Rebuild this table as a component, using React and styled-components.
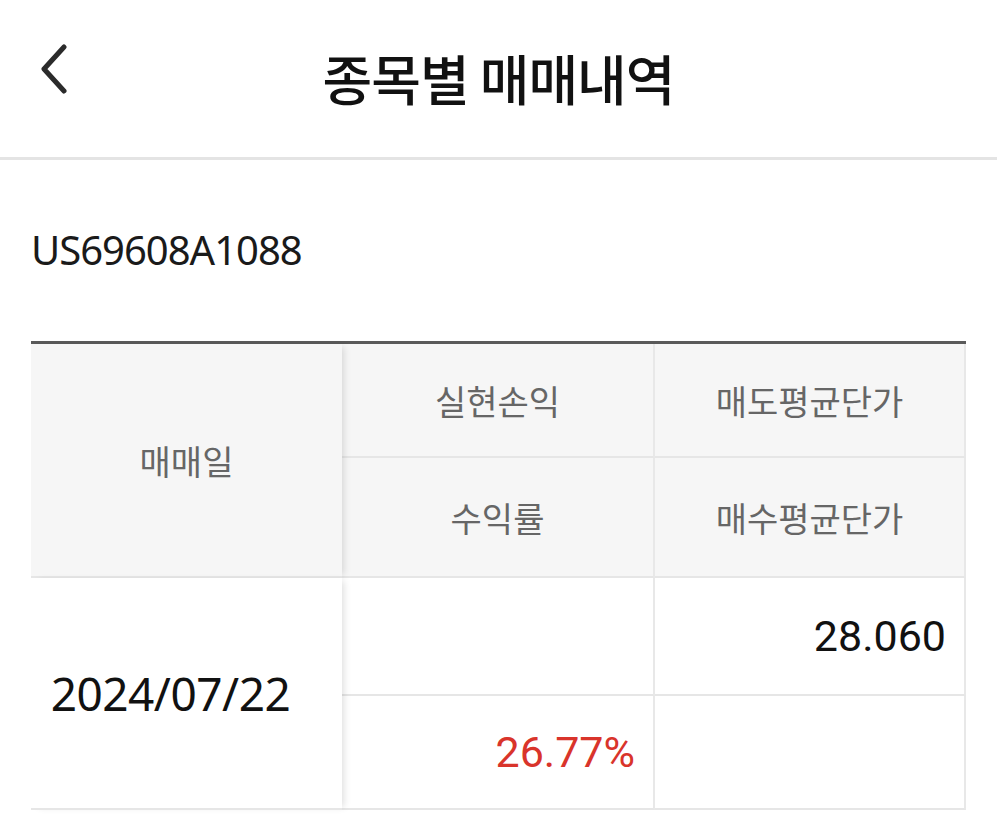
import React from 'react';
import styled, { createGlobalStyle } from 'styled-components';

const GlobalStyle = createGlobalStyle`
  body {
    margin: 0;
    background: #fff;
    font-family: 'Noto Sans', 'Noto Sans CJK KR', sans-serif;
  }
`;

const Page = styled.div`
  width: 997px;
  min-height: 825px;
  background: #fff;
`;

const Header = styled.header`
  height: 157px;
  border-bottom: 3px solid #e4e4e4;
  display: flex;
  align-items: center;
  justify-content: center;
  position: relative;
`;

const BackButton = styled.button`
  position: absolute;
  left: 34px;
  top: 40px;
  width: 38px;
  height: 58px;
  padding: 0;
  border: 0;
  background: none;
  display: flex;
  align-items: center;
  justify-content: center;
`;

const Title = styled.h1`
  margin: 0 0 3px;
  font-family: 'Noto Sans CJK KR', sans-serif;
  font-size: 54px;
  font-weight: 500;
  color: #111;
  letter-spacing: -1px;
`;

const Code = styled.div`
  margin: 66px 0 0 31px;
  font-family: 'Noto Sans', sans-serif;
  font-size: 40px;
  line-height: 48px;
  letter-spacing: -1px;
  color: #1a1a1a;
`;

const Table = styled.div`
  margin: 67px 0 0 31px;
  width: 935px;
  display: grid;
  grid-template-columns: 311px 313px 311px;
  grid-template-rows: 114px 120px 118px 114px;
  border-top: 3px solid #5a5a5a;
`;

const Cell = styled.div`
  grid-row: ${p => p.rows || 'auto'};
  display: flex;
  align-items: center;
  justify-content: ${p => (p.right ? 'flex-end' : 'center')};
  padding: 0 ${p => (p.right ? '18px' : p.first && !p.head ? '32px' : '0')} 0 0;
  background: ${p => (p.head ? '#f6f6f6' : '#fff')};
  border-bottom: 2px solid #e6e6e6;
  border-right: ${p => (p.first ? '0' : '2px solid #e8e8e8')};
  box-sizing: border-box;
  position: relative;
  z-index: ${p => (p.first ? 1 : 0)};
  box-shadow: ${p => (p.first ? '5px 0 7px -3px rgba(0, 0, 0, 0.13)' : 'none')};
`;

const HeadText = styled.span`
  font-family: 'Noto Sans CJK KR', sans-serif;
  font-size: 34px;
  color: #666;
`;

const DateText = styled.span`
  font-family: 'Noto Sans', sans-serif;
  font-size: 46px;
  color: #111;
  letter-spacing: -0.5px;
`;

const Value = styled.span`
  font-family: Roboto, sans-serif;
  font-size: 43px;
  color: ${p => p.color || '#111'};
`;

const BackIcon = () => (
  <svg width="30" height="50" viewBox="0 0 30 50" fill="none">
    <path d="M26 3 L6 25 L26 47" stroke="#2b2b2b" strokeWidth="5" strokeLinecap="round" strokeLinejoin="round" />
  </svg>
);

const App = () => (
  <Page>
    <GlobalStyle />
    <Header>
      <BackButton aria-label="back">
        <BackIcon />
      </BackButton>
      <Title>종목별 매매내역</Title>
    </Header>
    <Code>US69608A1088</Code>
    <Table>
      <Cell head first rows="1 / span 2">
        <HeadText>매매일</HeadText>
      </Cell>
      <Cell head>
        <HeadText>실현손익</HeadText>
      </Cell>
      <Cell head>
        <HeadText>매도평균단가</HeadText>
      </Cell>
      <Cell head>
        <HeadText>수익률</HeadText>
      </Cell>
      <Cell head>
        <HeadText>매수평균단가</HeadText>
      </Cell>
      <Cell first rows="3 / span 2">
        <DateText>2024/07/22</DateText>
      </Cell>
      <Cell right />
      <Cell right>
        <Value>28.060</Value>
      </Cell>
      <Cell right>
        <Value color="#d9342b">26.77%</Value>
      </Cell>
      <Cell right />
    </Table>
  </Page>
);

export default App;
